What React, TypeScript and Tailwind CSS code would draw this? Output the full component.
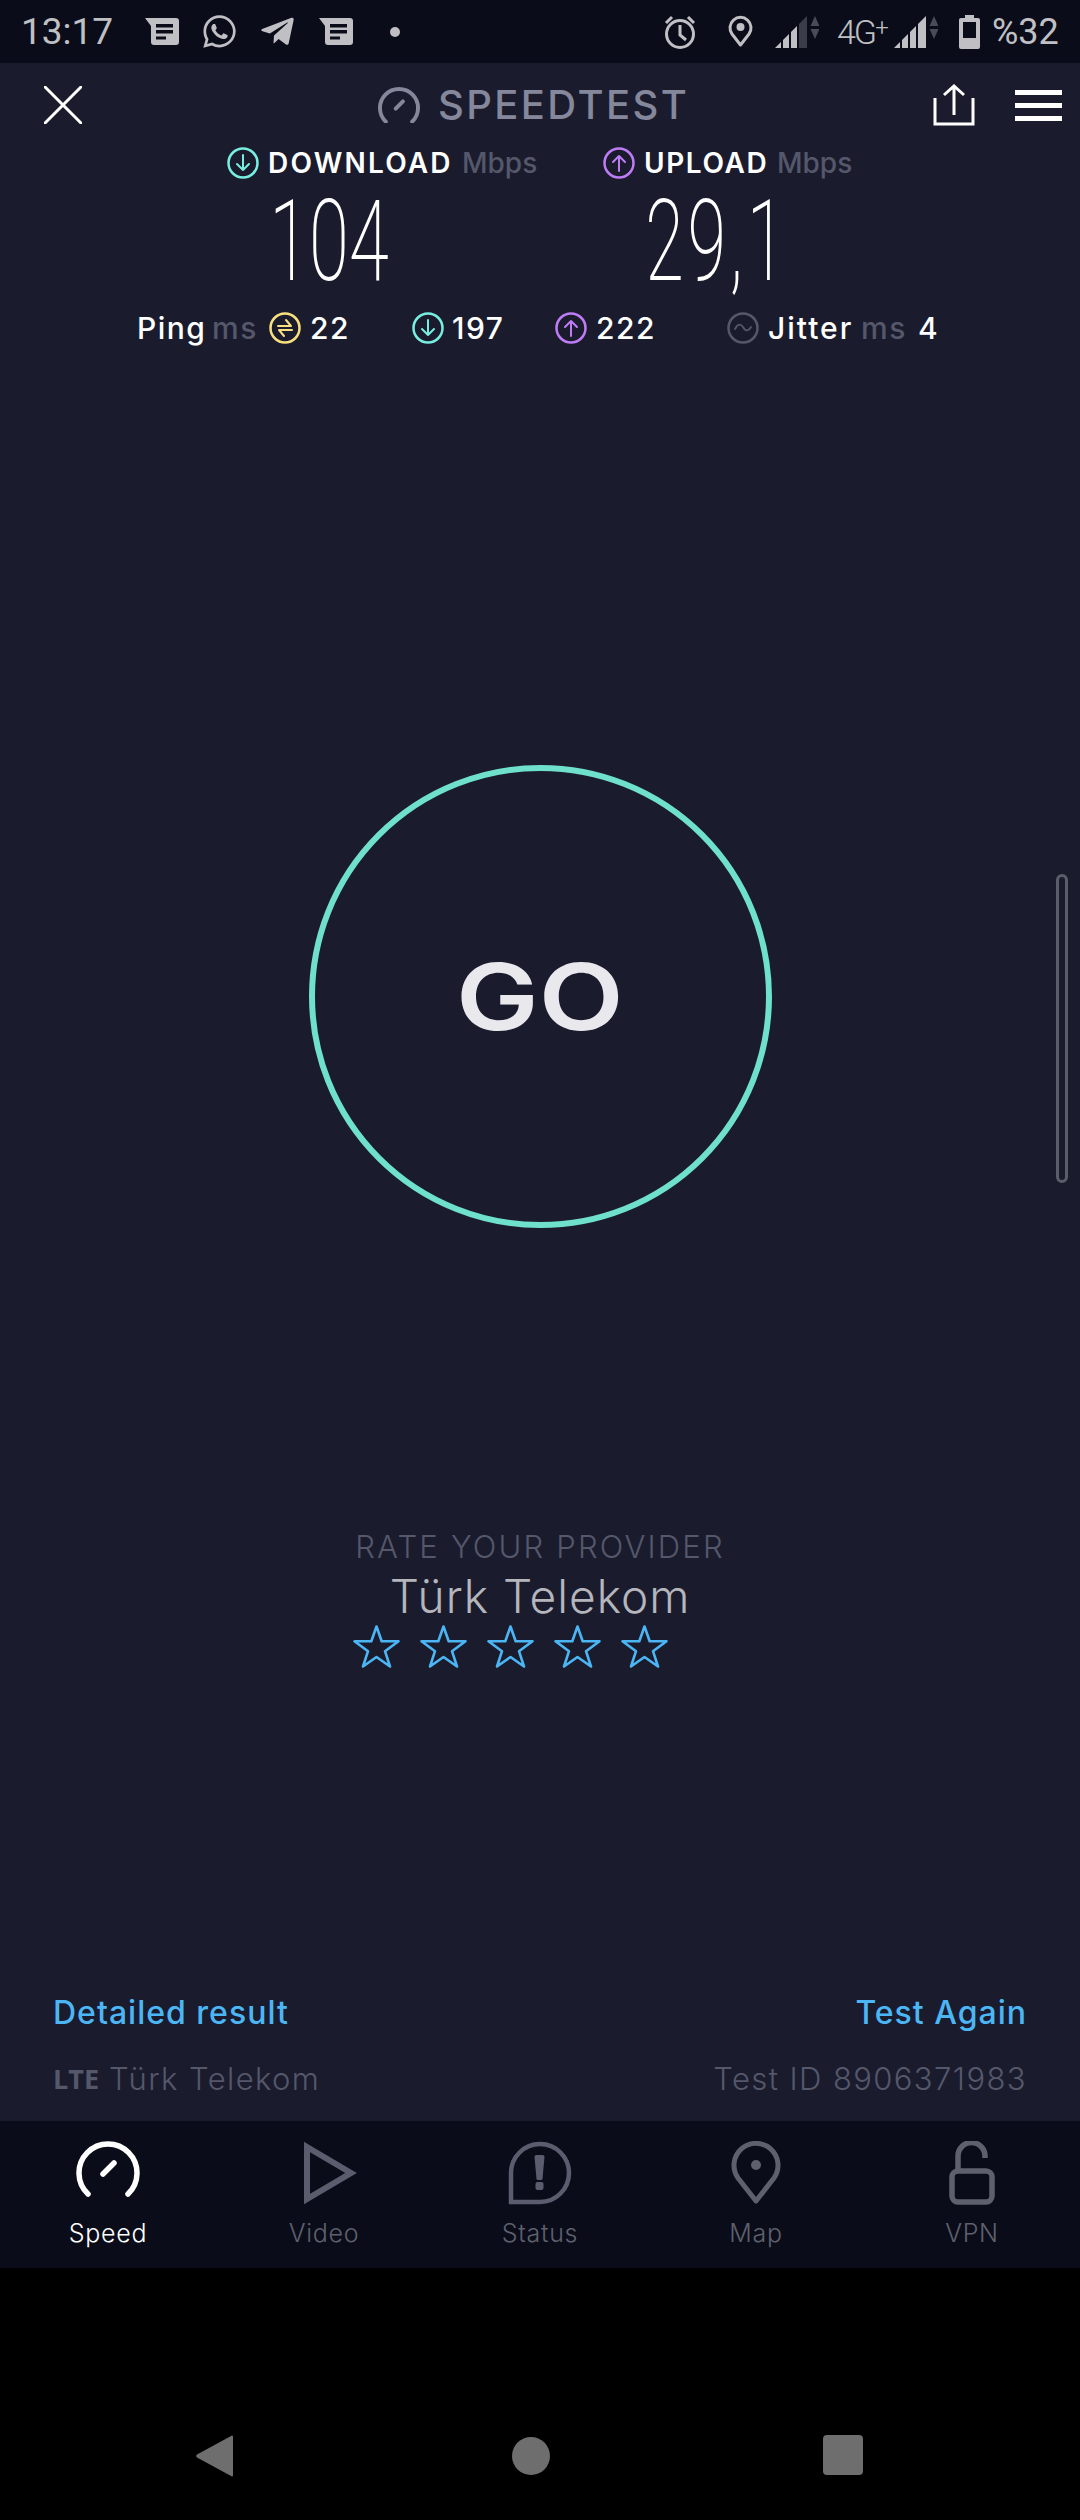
import { FaTelegramPlane, FaWhatsapp } from "react-icons/fa";

const MessageIcon = ({ className }: { className?: string }) => (
	<svg className={className} width="34" height="27" viewBox="0 0 34 27">
		<path d="M0 0H31a3 3 0 0 1 3 3V24a3 3 0 0 1-3 3H9a3 3 0 0 1-3-3V8Z" fill="#c0c0c4" />
		<path d="M11 6H28V9.500H11ZM11 12H28V15.500H11ZM11 18.500H21V21.500H11Z" fill="#0a0c19" />
	</svg>
);

const SignalIcon = ({ dim, className }: { dim?: boolean; className?: string }) => (
	<svg className={className} width="44" height="33" viewBox="0 0 44 33">
		<path d="M0 33L6 27V33Z" fill="#c0c0c4" />
		<path d="M8 25L14 19V33H8Z" fill="#c0c0c4" />
		<path d="M16 17L22 11V33H16Z" fill="#c0c0c4" />
		<path d="M24 9L32 1V33H24Z" fill={dim ? "#3b3c49" : "#c0c0c4"} />
		<path d="M40 1L44.500 11H35.500Z" fill="#4a4b58" />
		<path d="M35.500 14H44.500L40 24Z" fill="#4a4b58" />
	</svg>
);

const Gauge = ({ size, color, width }: { size: number; color: string; width: number }) => (
	<svg className="shrink-0" width={size} height={size * 0.875} viewBox="0 0 64 56" fill="none" stroke={color} strokeLinecap="round" strokeWidth={width}>
		<path d="M12 53A29 29 0 1 1 52 53" />
		<path d="M27 33L38 22" />
	</svg>
);

const Ring = ({ color, kind }: { color: string; kind: "down" | "up" | "ping" | "jitter" }) => (
	<svg className="shrink-0" width="32" height="32" viewBox="0 0 32 32" fill="none" stroke={color} strokeWidth="2.500" strokeLinecap="round" strokeLinejoin="round">
		<circle cx="16" cy="16" r="14.500" />
		{kind === "down" && <path d="M16 8V23M10 17L16 23L22 17" strokeWidth="2" />}
		{kind === "up" && <path d="M16 24V9M10 15L16 9L22 15" strokeWidth="2" />}
		{kind === "ping" && <path d="M9 14H22L17 8M23 18H10L15 24" strokeWidth="2" />}
		{kind === "jitter" && <path d="M8 17C11 11 14 12 16 15C18 19 21 20 24 15" strokeWidth="1.800" />}
	</svg>
);

const Star = () => (
	<svg width="47" height="43" viewBox="0 0 47 43" fill="none" stroke="#4cb6f5" strokeWidth="2.600" strokeLinejoin="round">
		<path d="M23.500 1.500L28.700 16.200H45.500L32 26.200L37 41.500L23.500 32L10 41.500L15 26.200L1.500 16.200H18.300Z" />
	</svg>
);

const tabs = [
	{
		label: "Speed",
		active: true,
		icon: (
			<div className="h-[64px] flex items-start justify-center">
				<Gauge size={64} color="#ffffff" width={5.5} />
			</div>
		),
	},
	{
		label: "Video",
		icon: (
			<svg className="ml-[14px]" width="54" height="64" viewBox="0 0 54 64" fill="none" stroke="#5b5d6e" strokeWidth="6">
				<path d="M3 6L47 32L3 58Z" />
			</svg>
		),
	},
	{
		label: "Status",
		icon: (
			<svg width="64" height="64" viewBox="0 0 64 64" fill="none" stroke="#5b5d6e" strokeWidth="4.500">
				<path d="M3 61V32A29 29 0 1 1 32 61Z" />
				<path d="M26.500 16A2 2 0 0 1 28.500 14H34.500A2 2 0 0 1 36.500 16L34.500 38A1.500 1.500 0 0 1 33 39H30A1.500 1.500 0 0 1 28.500 38Z" fill="#5b5d6e" stroke="none" />
				<rect x="27.500" y="41" width="8" height="8" rx="2" fill="#5b5d6e" stroke="none" />
			</svg>
		),
	},
	{
		label: "Map",
		icon: (
			<svg width="50" height="64" viewBox="0 0 50 64" fill="none" stroke="#5f606d" strokeWidth="5">
				<path d="M25 60L7 37A22 22 0 1 1 43 37Z" strokeLinejoin="round" />
				<circle cx="25" cy="24" r="5" fill="#5f606d" stroke="none" />
			</svg>
		),
	},
	{
		label: "VPN",
		icon: (
			<svg width="46" height="64" viewBox="0 0 46 64" fill="none" stroke="#5f606d" strokeWidth="5.500">
				<path d="M9 30V15A13 13 0 0 1 36 15V17" />
				<rect x="3" y="30" width="40" height="31" rx="6" />
			</svg>
		),
	},
];

const App = () => {
	return (
		<div className="relative w-[1080px] h-[2520px] flex flex-col bg-black overflow-hidden font-['Inter',sans-serif]">
			{/* status bar */}
			<div className="h-[63px] bg-[#0a0c19] flex items-center pl-[21px] text-[#c0c0c4] font-['Roboto',sans-serif]">
				<span className="text-[37px] w-[91px] leading-none">13:17</span>
				<MessageIcon className="ml-[33px]" />
				<FaWhatsapp className="ml-[22px] text-[37px]" />
				<FaTelegramPlane className="ml-[21px] text-[37px]" />
				<MessageIcon className="ml-[23px]" />
				<div className="ml-[37px] w-[10px] h-[10px] rounded-full bg-[#c0c0c4]" />
				<svg className="ml-[263px]" width="34" height="34" viewBox="0 0 34 34" fill="none" stroke="#c0c0c4" strokeWidth="3">
					<circle cx="17" cy="19" r="13.500" />
					<path d="M17 10V20L23 25M3 8L9 2M31 8L25 2" />
				</svg>
				<svg className="ml-[31px]" width="25" height="33" viewBox="0 0 25 33" fill="none" stroke="#c0c0c4" strokeWidth="3">
					<path d="M12.500 30L4 19A10.500 10.500 0 1 1 21 19Z" strokeLinejoin="round" />
					<circle cx="12.500" cy="12" r="4" fill="#c0c0c4" stroke="none" />
				</svg>
				<SignalIcon dim className="ml-[22px]" />
				<span className="ml-[18px] w-[50px] text-[34px] font-light leading-none tracking-[-2px] whitespace-nowrap">4G<sup className="text-[24px] -top-[8px]">+</sup></span>
				<SignalIcon className="ml-[7px]" />
				<svg className="ml-[21px]" width="21" height="34" viewBox="0 0 21 34">
					<path fillRule="evenodd" d="M6 0H15V3H19A2 2 0 0 1 21 5V32A2 2 0 0 1 19 34H2A2 2 0 0 1 0 32V5A2 2 0 0 1 2 3H6ZM4 7V23H17V7Z" fill="#c0c0c4" />
				</svg>
				<span className="ml-[12px] text-[36px] leading-none">%32</span>
			</div>

			{/* main screen */}
			<div className="relative h-[2058px] bg-[#1a1c2e] flex flex-col">
				<div className="h-[84px] flex items-center relative pl-[44px]">
					<svg className="shrink-0" width="38" height="38" viewBox="0 0 38 38" stroke="#ffffff" strokeWidth="3" strokeLinecap="round">
						<path d="M1 1L37 37M37 1L1 37" />
					</svg>
					<div className="ml-[296px] w-[308px] shrink-0 flex items-center gap-[18px]">
						<Gauge size={42} color="#85879b" width={6} />
						<span className="text-[#85879b] text-[40px] font-medium leading-none tracking-[2.400px]">SPEEDTEST</span>
					</div>
					<svg className="ml-[247px] shrink-0" width="42" height="42" viewBox="0 0 42 42" fill="none" stroke="#ffffff" strokeWidth="3">
						<path d="M2 14V40H40V14M21 31V2M11 11L21 2L31 11" />
					</svg>
					<div className="ml-[40px] w-[47px] shrink-0 flex flex-col gap-[8px]">
						<div className="h-[5px] bg-white" />
						<div className="h-[5px] bg-white" />
						<div className="h-[5px] bg-white" />
					</div>
				</div>

				<div className="pl-[227px] grid grid-cols-[376px_376px]">
					<div className="flex items-center h-[32px] text-[28px] leading-none whitespace-nowrap">
						<Ring color="#78eee0" kind="down" />
						<span className="ml-[9px] w-[185px] text-white font-semibold tracking-[2.200px]">DOWNLOAD</span>
						<span className="ml-[9px] text-[#55576a] font-medium">Mbps</span>
					</div>
					<div className="flex items-center h-[32px] text-[28px] leading-none whitespace-nowrap">
						<Ring color="#be7cf6" kind="up" />
						<span className="ml-[9px] w-[124px] text-white font-semibold tracking-[1.600px]">UPLOAD</span>
						<span className="ml-[9px] text-[#55576a] font-medium">Mbps</span>
					</div>
					<div className="mt-[10px] w-[204px] h-[106px] text-center text-white text-[113px] font-['Roboto',sans-serif] font-extralight leading-[106px] scale-x-[0.64]">104</div>
					<div className="mt-[10px] w-[222px] h-[106px] text-center text-white text-[113px] font-['Roboto',sans-serif] font-extralight leading-[106px] tracking-[6px] scale-x-[0.62]">29,1</div>
				</div>

				<div className="mt-[17px] pl-[137px] flex items-center h-[32px] text-[30px] leading-none font-medium text-white tracking-[1.500px]">
					<span className="w-[69px]">Ping</span>
					<span className="ml-[6px] w-[44px] text-[#55576a]">ms</span>
					<div className="ml-[13px]"><Ring color="#f8e07f" kind="ping" /></div>
					<span className="ml-[9px] w-[102px]">22</span>
					<Ring color="#78eee0" kind="down" />
					<span className="ml-[8px] w-[103px]">197</span>
					<Ring color="#be7cf6" kind="up" />
					<span className="ml-[9px] w-[131px]">222</span>
					<Ring color="#55576a" kind="jitter" />
					<span className="ml-[9px] w-[84px] tracking-[2px]">Jitter</span>
					<span className="ml-[9px] w-[44px] text-[#55576a]">ms</span>
					<span className="ml-[13px]">4</span>
				</div>

				{/* GO */}
				<div className="mt-[421px] mx-auto w-[463px] h-[463px] rounded-full border-[6px] border-[#6fe0cb] flex items-center justify-center">
					<span className="text-[#e9e9ed] text-[92px] font-semibold leading-none scale-x-[1.2]">GO</span>
				</div>

				{/* provider rating */}
				<div className="mt-[302px] flex flex-col items-center">
					<div className="text-[#55576a] text-[31px] font-light leading-[34px] tracking-[2.200px]">RATE YOUR PROVIDER</div>
					<div className="mt-[5px] text-[#b5b5bc] text-[46px] font-light leading-[54px] tracking-[1px]">Türk Telekom</div>
				</div>
				<div className="mt-[2px] ml-[353px] flex gap-[20px]">
					<Star />
					<Star />
					<Star />
					<Star />
					<Star />
				</div>

				{/* footer lines */}
				<div className="mt-auto px-[53px] pb-[24px]">
					<div className="flex justify-between text-[#4cb6f5] text-[32px] font-medium leading-[36px] tracking-[1px]">
						<span>Detailed result</span>
						<span>Test Again</span>
					</div>
					<div className="mt-[30px] flex items-center text-[#55576a] text-[31px] font-light leading-[36px] tracking-[1.400px]">
						<span className="text-[27px] font-bold font-['Open_Sans',sans-serif] w-[56px] tracking-normal">LTE</span>
						<span>Türk Telekom</span>
						<span className="ml-auto">Test ID 8906371983</span>
					</div>
				</div>

				{/* scrollbar */}
				<div className="absolute left-[1056px] top-[811px] w-[12px] h-[309px] rounded-full border-[3px] border-[#5b5d6b]" />
			</div>

			{/* tab bar */}
			<div className="h-[147px] bg-[#0a0c19] grid grid-cols-5 pt-[20px]">
				{tabs.map((t) => (
					<div key={t.label} className="flex flex-col items-center">
						<div className="h-[64px] flex items-center justify-center">{t.icon}</div>
						<span className={`mt-[13px] text-[25px] leading-[30px] font-light tracking-[0.700px] ${t.active ? "text-white" : "text-[#5f606d]"}`}>{t.label}</span>
					</div>
				))}
			</div>

			{/* android nav */}
			<div className="flex-1 flex items-start pt-[167px] pl-[196px]">
				<svg width="37" height="42" viewBox="0 0 37 42">
					<path d="M36 0.500A1 1 0 0 1 37 1.500V40.500A1 1 0 0 1 36 41.500L1 22.500A2 2 0 0 1 1 19.500Z" fill="#6e6e6e" />
				</svg>
				<div className="ml-[279px] mt-[2px] w-[38px] h-[38px] rounded-full bg-[#6e6e6e]" />
				<div className="ml-[273px] w-[40px] h-[40px] rounded-[4px] bg-[#6e6e6e]" />
			</div>
		</div>
	);
};

export default App;
